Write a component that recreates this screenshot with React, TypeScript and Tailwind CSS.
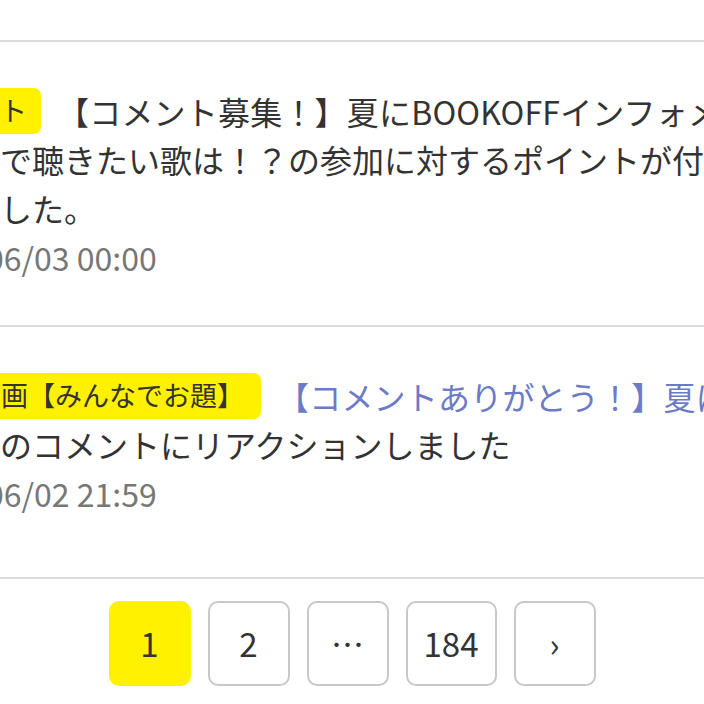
const font = "font-['Noto_Sans_CJK_JP','Noto_Sans',sans-serif]";

type Line = { text: string };

function Badge({ children, bleed }: { children: React.ReactNode; bleed: string }) {
  return (
    <span
      className={`${bleed} inline-flex h-[46px] shrink-0 items-center rounded-[7px] bg-[#fff100] text-[27px] text-[#333]`}
    >
      {children}
    </span>
  );
}

function Item({
  badge,
  title,
  titleColor,
  lines,
  date,
  last,
}: {
  badge: React.ReactNode;
  title: string;
  titleColor: string;
  lines: Line[];
  date: string;
  last?: boolean;
}) {
  return (
    <li className={`border-b-2 border-[#dcdcdc] pt-[44px] ${last ? "pb-[59px]" : "pb-[43px]"}`}>
      <div className="flex h-[49px] items-center whitespace-nowrap">
        {badge}
        <span className={`ml-[16px] text-[32px] tracking-[0.2px] ${titleColor}`}>{title}</span>
      </div>
      {lines.map((l) => (
        <div key={l.text} className="h-[49px] whitespace-nowrap text-[32px] leading-[49px] text-[#333]">
          {l.text}
        </div>
      ))}
      <div className="-ml-[14px] h-[49px] whitespace-nowrap text-[32px] leading-[49px] text-[#777]">
        {date}
      </div>
    </li>
  );
}

function PageBtn({ children, active, wide }: { children: React.ReactNode; active?: boolean; wide?: boolean }) {
  return (
    <button
      className={`flex h-[85px] ${wide ? "w-[91px]" : "w-[82px]"} items-center justify-center rounded-[10px] border-2 text-[33px] text-[#333] ${
        active ? "border-[#fff100] bg-[#fff100]" : "border-[#c8c8c8] bg-white"
      }`}
    >
      {children}
    </button>
  );
}

export default function App() {
  return (
    <div className={`${font} min-h-screen w-[704px] overflow-hidden bg-white`}>
      <div className="h-[40px]" />
      <ul className="border-t-2 border-[#dcdcdc]">
        <Item
          badge={<Badge bleed="-ml-[20px] pl-[20px] pr-[14px]">ト</Badge>}
          title="【コメント募集！】夏にBOOKOFFインフォメーション"
          titleColor="text-[#333]"
          lines={[
            { text: "で聴きたい歌は！？の参加に対するポイントが付与" },
            { text: "した。" },
          ]}
          date="06/03 00:00"
        />
        <Item
          badge={<Badge bleed="-ml-[20px] pl-[21px] pr-[17px]">画【みんなでお題】</Badge>}
          title="【コメントありがとう！】夏にBOOKOFF"
          titleColor="text-[#6b7bc6]"
          lines={[{ text: "のコメントにリアクションしました" }]}
          date="06/02 21:59"
          last
        />
      </ul>
      <nav className="flex justify-center gap-[17px] pt-[22px] pb-[20px]">
        <PageBtn active>1</PageBtn>
        <PageBtn>2</PageBtn>
        <PageBtn>…</PageBtn>
        <PageBtn wide>184</PageBtn>
        <PageBtn>›</PageBtn>
      </nav>
    </div>
  );
}
